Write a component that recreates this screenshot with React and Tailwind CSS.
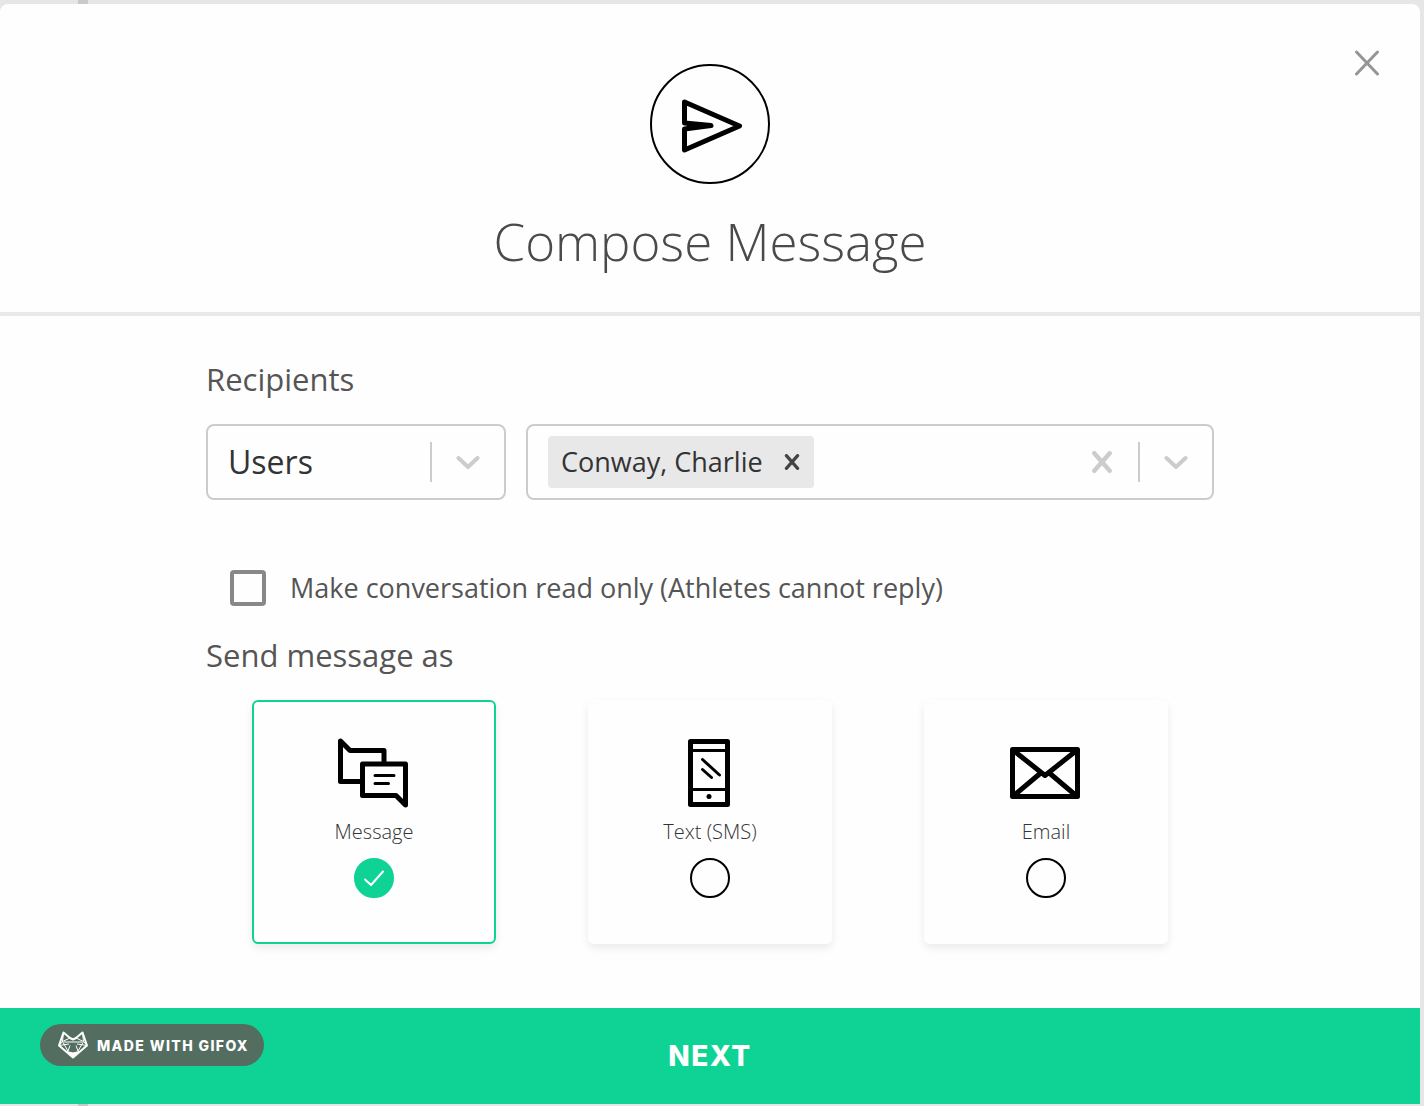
import React, { useState } from 'react'

const CHANNELS = [
  { id: 'message', label: 'Message', icon: MessageIcon },
  { id: 'sms', label: 'Text (SMS)', icon: PhoneIcon },
  { id: 'email', label: 'Email', icon: MailIcon },
]

function SendIcon() {
  return (
    <svg viewBox="0 0 116 116" className="size-full" fill="none" stroke="#000" strokeWidth="5" strokeLinejoin="round" strokeLinecap="round" aria-hidden="true">
      <path d="M32.500 36 L87.500 60 L32.500 84 V63 L59 59.500 L32.500 57 Z" />
      <path d="M36 58.500 L57 59.500 L36 61.500" strokeWidth="3" />
    </svg>
  )
}

function MessageIcon() {
  return (
    <svg viewBox="0 0 72 72" className="size-[72px]" fill="none" stroke="#000" strokeWidth="5" strokeLinejoin="round" strokeLinecap="round" aria-hidden="true">
      <path d="M23 45.500H2.500V5L12 14.500H46V27" />
      <path d="M24.500 28H67.500V69L58 59.500H24.500Z" />
      <path d="M37 39.500H56M37 47.500H50.500" strokeWidth="3" />
    </svg>
  )
}

function PhoneIcon() {
  return (
    <svg viewBox="0 0 72 72" className="size-[72px]" fill="none" stroke="#000" strokeWidth="4" strokeLinejoin="round" strokeLinecap="round" aria-hidden="true">
      <rect x="16.500" y="5.500" width="37" height="63" strokeWidth="5" />
      <path d="M17 14.500H53M17 53.500H53" strokeWidth="3" />
      <path d="M28.500 23.500L45.500 39M28.500 33.500L37.500 41.500" strokeWidth="3" />
      <circle cx="35" cy="60.500" r="2.500" fill="#000" stroke="none" />
    </svg>
  )
}

function MailIcon() {
  return (
    <svg viewBox="0 0 72 72" className="size-[72px]" fill="none" stroke="#000" strokeWidth="5" strokeLinejoin="round" strokeLinecap="round" aria-hidden="true">
      <rect x="2.500" y="13.500" width="65" height="47" />
      <path d="M3.500 14.500L35 39.500L66.500 14.500M4 59.500L29.500 38M66 59.500L40.500 38" strokeWidth="5" />
    </svg>
  )
}

function FoxIcon() {
  return (
    <svg viewBox="0 0 32 28" className="w-8 h-7" fill="none" stroke="#fff" strokeLinejoin="round" aria-hidden="true">
      <path d="M6.500 1.500L13 7L16 8.500L19 7L25.500 1.500L30 14.500L16 26.500L2 14.500Z" strokeWidth="2" />
      <path d="M6.500 1.500L5.500 10.500L2 14.500M25.500 1.500L26.500 10.500L30 14.500M13 7L5.500 10.500L11 20L13 14.500M19 7L26.500 10.500L21 20L19 14.500M7 11L12 11H20L25 11M2 14.500L12 13M30 14.500L20 13" strokeWidth="1" />
      <path d="M10 20.500L16 22L22 20.500L16 26Z" fill="#fff" />
    </svg>
  )
}

function Chevron() {
  return (
    <svg viewBox="0 0 24 14" className="w-6 h-[14px]" fill="none" stroke="#ccc" strokeWidth="4" strokeLinecap="round" strokeLinejoin="round" aria-hidden="true">
      <path d="M2.500 3L12 12L21.500 3" />
    </svg>
  )
}

function Cross({ className }) {
  return (
    <svg viewBox="0 0 20 20" className={className} fill="none" stroke="currentColor" strokeWidth="4" strokeLinecap="round" aria-hidden="true">
      <path d="M3 2L17 18M17 2L3 18" />
    </svg>
  )
}

export default function App() {
  const [channel, setChannel] = useState('message')
  const [readOnly, setReadOnly] = useState(false)
  const [recipients, setRecipients] = useState(['Conway, Charlie'])

  return (
    <div className="min-h-screen flex flex-col bg-[#e6e6e6] pr-1 font-['Open_Sans',sans-serif] text-[#4a4a4a]">
      <div className="h-1 pl-[78px]"><div className="h-1 w-[10px] bg-[#c9c9c9]" /></div>

      <form className="flex-1 flex flex-col bg-[#fefefe] rounded-t-lg" onSubmit={e => e.preventDefault()}>
        {/* Header */}
        <header className="relative flex flex-col items-center pt-[60px] pb-[38px] border-b-4 border-[#e9e9e9]">
          <div className="size-[120px] rounded-full border-2 border-black">
            <SendIcon />
          </div>
          <h1 className="mt-6 text-[51px] leading-[66px] font-light">Compose Message</h1>
          <button type="button" aria-label="Close" className="absolute top-[46px] right-10 size-[26px] text-[#959595]">
            <svg viewBox="0 0 26 26" className="size-[26px]" fill="none" stroke="currentColor" strokeWidth="3" strokeLinecap="round" aria-hidden="true">
              <path d="M2.500 2L23.500 24M23.500 2L2.500 24" />
            </svg>
          </button>
        </header>

        {/* Fields */}
        <main className="flex-1 w-full max-w-[1008px] mx-auto pt-10 pb-16">
          <h2 className="text-[31px] leading-[46px] text-[#555]">Recipients</h2>
          <div className="flex gap-5 mt-[22px]">
            <div className="relative w-[300px] h-[76px]">
              <select aria-label="Recipient type" className="appearance-none size-full pl-5 border-2 border-[#ccc] rounded-lg bg-transparent text-[32px] text-[#333]">
                <option>Users</option>
                <option>Groups</option>
              </select>
              <div className="absolute inset-y-0 right-0 flex items-center gap-6 pr-[26px] pointer-events-none">
                <span className="w-[2px] h-10 bg-[#ccc]" />
                <Chevron />
              </div>
            </div>
            <div className="flex-1 flex items-center h-[76px] pl-5 pr-6 border-2 border-[#ccc] rounded-lg">
              {recipients.map(name => (
                <span key={name} className="flex items-center h-[52px] pl-[13px] bg-[#e8e8e8] rounded text-[27px] text-[#333]">
                  {name}
                  <button type="button" aria-label={`Remove ${name}`} onClick={() => setRecipients(recipients.filter(r => r !== name))} className="px-[14px] ml-[7px] text-[#444]">
                    <Cross className="size-4" />
                  </button>
                </span>
              ))}
              <input type="text" aria-label="Add recipient" className="flex-1 min-w-0 outline-none text-[27px]" />
              <button type="button" aria-label="Clear recipients" onClick={() => setRecipients([])} className="text-[#ccc]">
                <Cross className="size-[22px]" />
              </button>
              <span className="w-[2px] h-10 ml-[25px] mr-6 bg-[#ccc]" />
              <button type="button" aria-label="Show recipients"><Chevron /></button>
            </div>
          </div>

          <label className="flex items-center gap-6 mt-[66px] pl-6 h-11 text-[27px] text-[#555]">
            <input type="checkbox" checked={readOnly} onChange={e => setReadOnly(e.target.checked)}
              className="appearance-none size-9 border-4 border-[#888] rounded checked:bg-[#888]" />
            Make conversation read only (Athletes cannot reply)
          </label>

          <h2 id="send-as" className="mt-[22px] text-[31px] leading-[46px] text-[#555]">Send message as</h2>
          <div role="radiogroup" aria-labelledby="send-as" className="grid grid-cols-3 justify-items-center mt-[22px]">
            {CHANNELS.map(({ id, label, icon: Icon }) => (
              <label key={id} className="flex flex-col items-center size-[244px] pt-[34px] border-2 border-transparent rounded-md shadow-[0_4px_8px_rgba(0,0,0,0.08)] has-checked:border-[#0fd395]">
                <Icon />
                <span className="mt-2 text-[20px] leading-8 font-light text-[#333]">{label}</span>
                <span className="relative mt-[10px] size-10">
                  <input type="radio" name="channel" value={id} checked={channel === id} onChange={() => setChannel(id)}
                    className="block appearance-none size-10 rounded-full border-2 border-black checked:border-[#0fd395] checked:bg-[#0fd395]" />
                  {channel === id && (
                    <svg viewBox="0 0 40 40" className="absolute inset-0 size-10 pointer-events-none" fill="none" stroke="#fff" strokeWidth="2" strokeLinecap="round" strokeLinejoin="round" aria-hidden="true">
                      <path d="M11 21.500L17 27L29 13.500" />
                    </svg>
                  )}
                </span>
              </label>
            ))}
          </div>
        </main>

        {/* Footer */}
        <footer className="relative">
          <button type="submit" className="w-full h-24 bg-[#0fd395] text-white text-[28px] font-['Inter',sans-serif] font-extrabold tracking-wider">NEXT</button>
          <div className="absolute left-10 top-4 flex items-center gap-2 h-[42px] w-56 pl-[17px] rounded-full bg-[#536e61] text-white">
            <FoxIcon />
            <span className="text-[14px] whitespace-nowrap font-['Inter',sans-serif] font-extrabold tracking-widest">MADE WITH GIFOX</span>
          </div>
        </footer>
      </form>
      <div className="h-[2px] pl-[78px]"><div className="h-[2px] w-[10px] bg-[#c9c9c9]" /></div>
    </div>
  )
}
